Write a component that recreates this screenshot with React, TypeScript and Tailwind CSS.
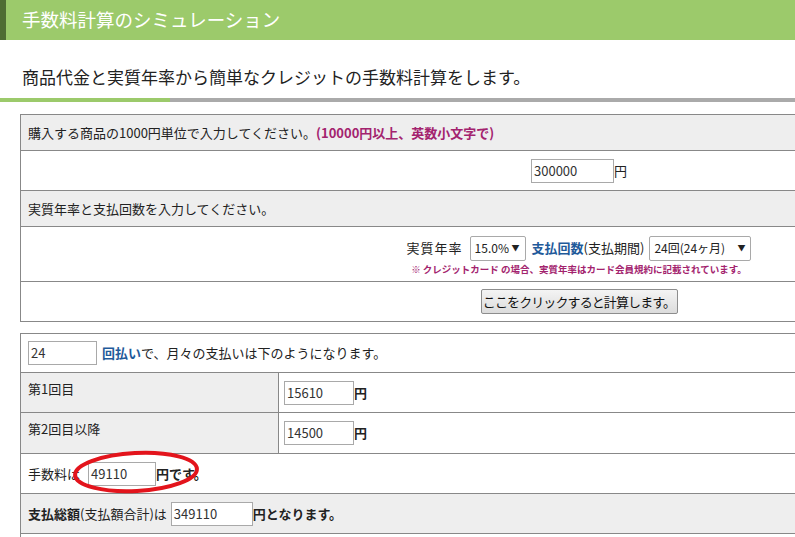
const jp = { fontFamily: '"Noto Sans CJK JP", "Liberation Sans", sans-serif' };

function Field({ value, w }: { value: string; w: string }) {
  return (
    <span
      className={`inline-flex h-[24px] ${w} items-center border border-[#a9a9a9] bg-white pl-[2px] align-middle text-[13px] text-[#333]`}
    >
      {value}
    </span>
  );
}

function Select({ label, w }: { label: string; w: string }) {
  return (
    <span
      className={`inline-flex h-[25px] ${w} items-center justify-between rounded-[2px] border border-[#a9a9a9] bg-white pl-[4px] pr-[5px] align-middle text-[12px] text-[#222]`}
    >
      <span>{label}</span>
      <span className="text-[8px]">▼</span>
    </span>
  );
}

export default function App() {
  return (
    <div className="h-[537px] w-[795px] overflow-hidden bg-white text-[#222]" style={jp}>
      <div className="w-[1160px]">
        {/* title bar */}
        <div className="flex h-[40px] items-center bg-[#9cca6b]">
          <div className="h-full w-[6px] bg-[#4f6d33]" />
          <h1 className="pl-[16px] text-[18.5px] font-normal text-white">手数料計算のシミュレーション</h1>
        </div>

        <p className="pl-[22px] pt-[25px] text-[17px] leading-[24px]">
          商品代金と実質年率から簡単なクレジットの手数料計算をします。
        </p>
        <div className="mt-[9px] flex h-[4px]">
          <div className="w-[170px] bg-[#9cca6b]" />
          <div className="flex-1 bg-[#aaaaaa]" />
        </div>

        {/* input table */}
        <table className="ml-[20px] mt-[12px] w-[1118px] border-collapse text-[13px]">
          <tbody>
            <tr className="h-[36px] bg-[#eeeeee]">
              <td className="border border-[#888] px-[7px]">
                購入する商品の1000円単位で入力してください。
                <span className="font-bold text-[#a3236e]">(10000円以上、英数小文字で)</span>
              </td>
            </tr>
            <tr className="h-[40px]">
              <td className="border border-[#888] text-center">
                <Field value="300000" w="w-[83px]" />
                <span className="align-middle">円</span>
              </td>
            </tr>
            <tr className="h-[36px] bg-[#eeeeee]">
              <td className="border border-[#888] px-[7px]">実質年率と支払回数を入力してください。</td>
            </tr>
            <tr className="h-[55px]">
              <td className="border border-[#888] text-center">
                <div className="flex items-center justify-center gap-[5px] pt-[3px]">
                  <span className="mr-[2px] tracking-[1px]">実質年率</span>
                  <Select label="15.0%" w="w-[56px]" />
                  <span className="ml-[1px] font-bold text-[#1f5a9a]">支払回数</span>
                  <span className="-ml-[5px]">(支払期間)</span>
                  <Select label="24回(24ヶ月)" w="w-[102px]" />
                </div>
                <div className="mt-[1px] text-[9.5px] font-bold leading-[14px] text-[#a3236e]">
                  ※ クレジットカード の場合、実質年率はカード会員規約に記載されています。
                </div>
              </td>
            </tr>
            <tr className="h-[40px]">
              <td className="border border-[#888] text-center">
                <button className="h-[25px] w-[197px] whitespace-nowrap rounded-[2px] border border-[#8d8d8d] bg-gradient-to-b from-[#f4f4f4] to-[#dcdcdc] px-0 align-middle text-[13px] tracking-[-0.9px] text-[#111]">
                  ここをクリックすると計算します。
                </button>
              </td>
            </tr>
          </tbody>
        </table>

        {/* result table */}
        <div className="relative">
          <table className="ml-[20px] mt-[11px] w-[1118px] border-collapse text-[13px]">
            <tbody>
              <tr className="h-[39px]">
                <td colSpan={2} className="border border-[#888] px-[7px]">
                  <Field value="24" w="w-[69px]" />
                  <span className="ml-[5px] align-middle font-bold text-[#1f5a9a]">回払い</span>
                  <span className="align-middle">で、月々の支払いは下のようになります。</span>
                </td>
              </tr>
              <tr className="h-[40px]">
                <td className="w-[258px] border border-[#888] bg-[#eeeeee] px-[7px] pb-[8px]">第1回目</td>
                <td className="border border-[#888] px-[5px]">
                  <Field value="15610" w="w-[70px]" />
                  <span className="align-middle font-bold">円</span>
                </td>
              </tr>
              <tr className="h-[41px]">
                <td className="border border-[#888] bg-[#eeeeee] px-[7px] pb-[8px]">第2回目以降</td>
                <td className="border border-[#888] px-[5px]">
                  <Field value="14500" w="w-[70px]" />
                  <span className="align-middle font-bold">円</span>
                </td>
              </tr>
              <tr className="h-[40px]">
                <td colSpan={2} className="border border-[#888] px-[7px]">
                  <span className="mr-[8px] align-middle">手数料は</span>
                  <Field value="49110" w="w-[68px]" />
                  <span className="align-middle font-bold">円です。</span>
                </td>
              </tr>
              <tr className="h-[40px] bg-[#eeeeee]">
                <td colSpan={2} className="border border-[#888] px-[7px]">
                  <span className="align-middle font-bold">支払総額</span>
                  <span className="mr-[4px] align-middle">(支払額合計)は</span>
                  <Field value="349110" w="w-[82px]" />
                  <span className="align-middle font-bold">円となります。</span>
                </td>
              </tr>
              <tr className="h-[40px]">
                <td colSpan={2} className="border border-[#888]" />
              </tr>
            </tbody>
          </table>
          {/* red highlight ring */}
          <svg className="pointer-events-none absolute left-[70px] top-[116px]" width="132" height="46" viewBox="0 0 132 46">
            <ellipse cx="66" cy="23" rx="61" ry="19" fill="none" stroke="#e3141c" strokeWidth="4" transform="rotate(-3 66 23)" />
          </svg>
        </div>
      </div>
    </div>
  );
}
